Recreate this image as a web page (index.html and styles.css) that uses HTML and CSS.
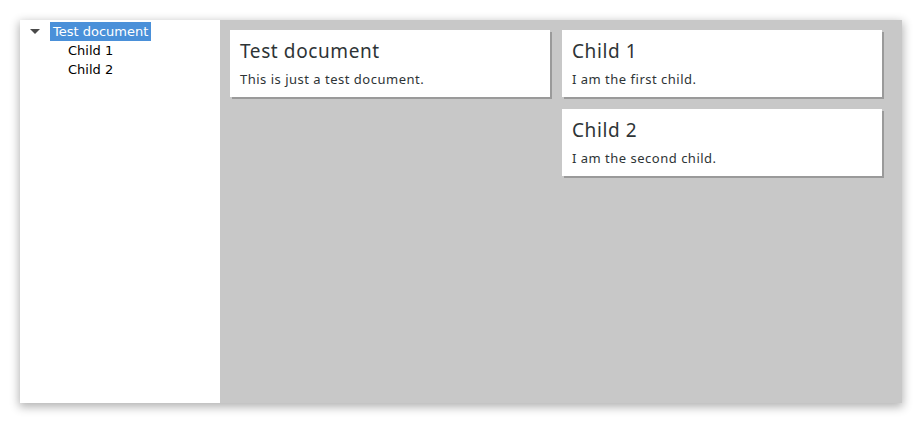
FILE: index.html
```html
<!DOCTYPE html>
<html>
<head>
<meta charset="utf-8">
<link rel="stylesheet" href="styles.css">
</head>
<body>
<div class="window">
  <aside class="sidebar">
    <ul class="tree">
      <li class="row parent">
        <span class="expander"><svg width="10" height="6" viewBox="0 0 10 6"><path d="M0 0 L10 0 L5 5 Z" fill="#4a4a4a"/></svg></span>
        <span class="label selected">Test document</span>
      </li>
      <li class="row child"><span class="label">Child 1</span></li>
      <li class="row child"><span class="label">Child 2</span></li>
    </ul>
  </aside>
  <main class="content">
    <div class="column">
      <div class="card">
        <h2 class="card-title">Test document</h2>
        <p class="card-text">This is just a test document.</p>
      </div>
    </div>
    <div class="column">
      <div class="card">
        <h2 class="card-title">Child 1</h2>
        <p class="card-text">I am the first child.</p>
      </div>
      <div class="card">
        <h2 class="card-title">Child 2</h2>
        <p class="card-text">I am the second child.</p>
      </div>
    </div>
  </main>
</div>
</body>
</html>
```
FILE: styles.css
```css
html, body {
  margin: 0;
  padding: 0;
  background: #ffffff;
}
body {
  padding: 20px;
}
.window {
  width: 882px;
  height: 383px;
  display: flex;
  box-shadow: 0 3px 9px 1px rgba(0,0,0,0.3);
}
.sidebar {
  width: 200px;
  background: #ffffff;
  font-family: "DejaVu Sans", sans-serif;
  font-size: 13px;
  color: #000;
}
.tree {
  list-style: none;
  margin: 0;
  padding: 2px 0 0 0;
}
.row {
  display: flex;
  align-items: center;
  height: 19px;
}
.parent {
  padding-left: 10px;
}
.expander {
  width: 20px;
  display: flex;
  align-items: center;
  margin-top: 1px;
}
.expander svg { display: block; }
.label {
  padding: 0 3px;
  line-height: 19px;
}
.selected {
  background: #4a90d9;
  color: #ffffff;
}
.child {
  padding-left: 45px;
}
.content {
  flex: 1;
  background: #c8c8c8;
  padding: 10px;
  display: flex;
  align-items: flex-start;
  gap: 12px;
}
.column {
  display: flex;
  flex-direction: column;
  gap: 12px;
}
.card {
  width: 320px;
  height: 67px;
  box-sizing: border-box;
  background: #ffffff;
  box-shadow: 2px 2px 0 0 #9a9a9a;
  padding: 9px 10px 8px;
  font-family: "Noto Sans", sans-serif;
  color: #2e3436;
}
.card-title {
  margin: 0;
  font-size: 19px;
  letter-spacing: 0.6px;
  font-weight: normal;
  line-height: 24px;
}
.card-text {
  margin: 7px 0 0 0;
  font-size: 13px;
  letter-spacing: 0.5px;
  line-height: 18px;
}
```
